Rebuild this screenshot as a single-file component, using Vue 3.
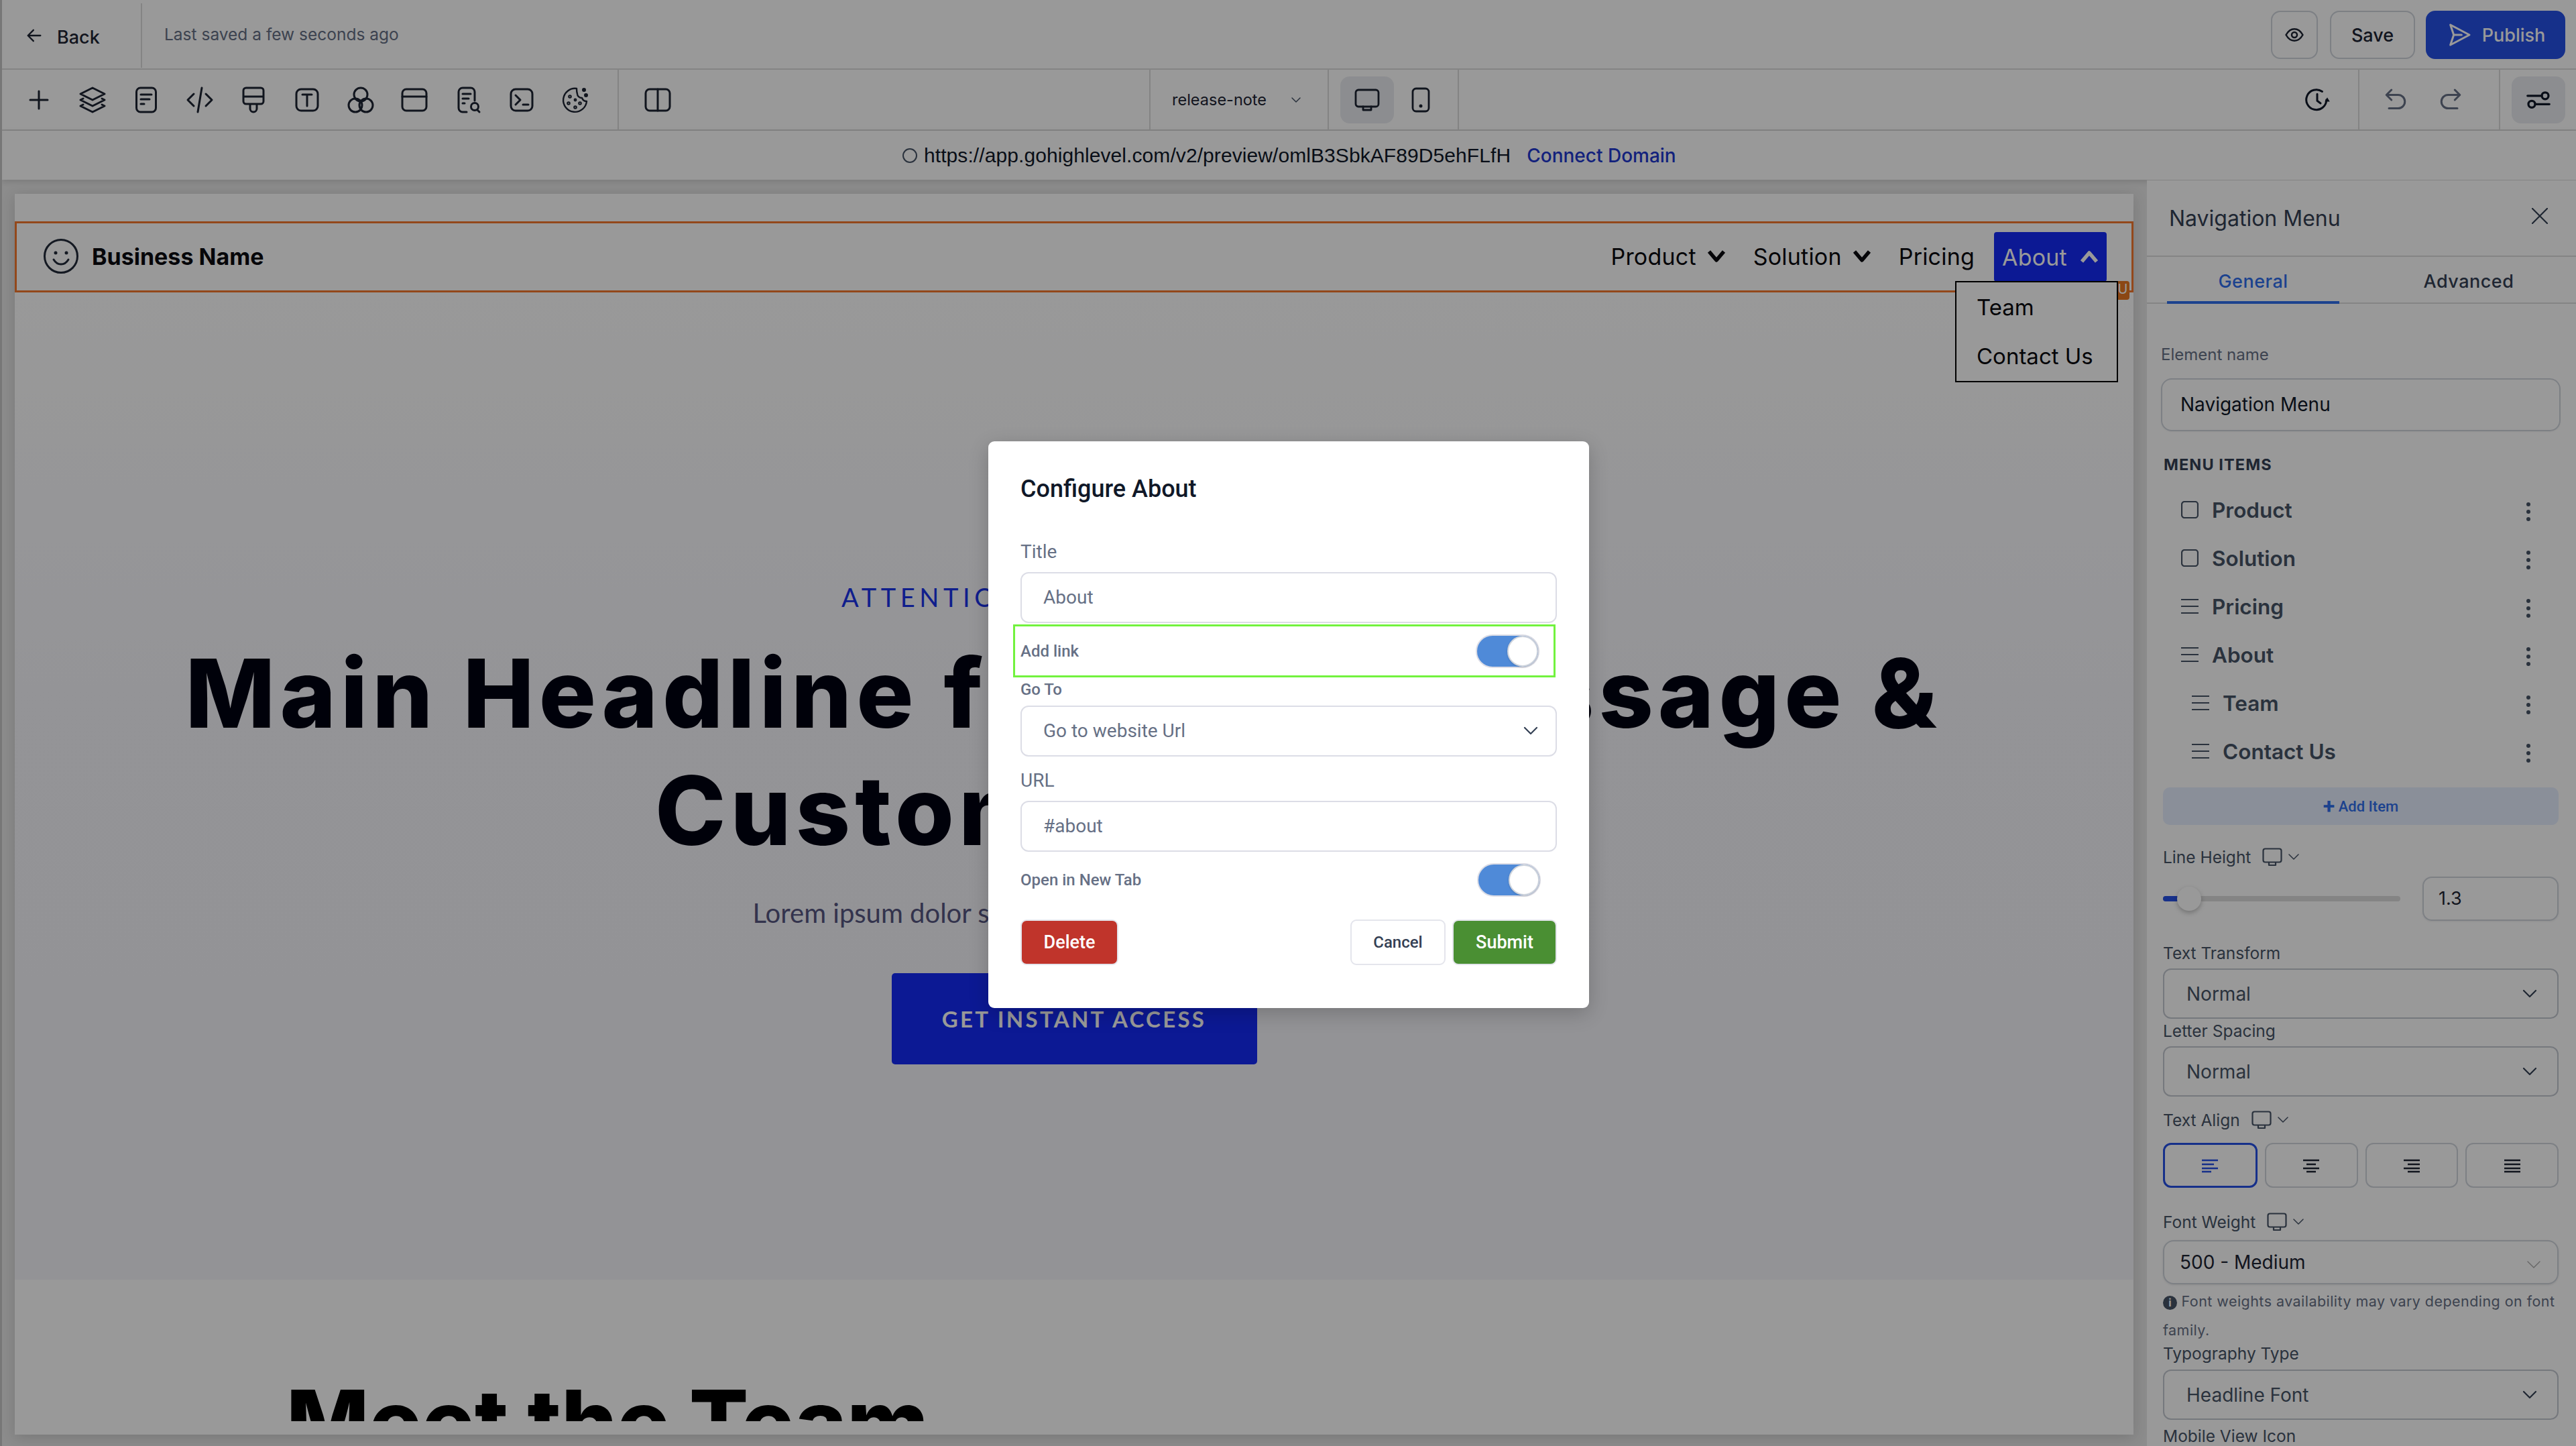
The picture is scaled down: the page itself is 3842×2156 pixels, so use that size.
<template>
  <div class="app">
    <header class="topbar">
      <div class="back">
        <svg class="ic-back" viewBox="0 0 24 24"><path d="M20 12H5M11 5l-7 7 7 7" /></svg>
        <span>Back</span>
      </div>
      <div class="saved">Last saved a few seconds ago</div>
      <div class="top-actions">
        <button class="btn-eye">
          <svg viewBox="0 0 24 24"><path d="M2 12c2.600-4.600 6-7 10-7s7.400 2.400 10 7c-2.600 4.600-6 7-10 7s-7.400-2.400-10-7z" /><circle cx="12" cy="12" r="3.200" /></svg>
        </button>
        <button class="btn-save">Save</button>
        <button class="btn-publish">
          <svg viewBox="0 0 24 24"><path d="M4 3l17 9-17 9 3-9-3-9zM7 12h7" /></svg>
          <span>Publish</span>
        </button>
      </div>
    </header>

    <div class="toolbar">
      <div class="tools">
        <span v-for="(t, i) in tools" :key="i" class="tool">
          <svg viewBox="0 0 44 44" v-html="t"></svg>
        </span>
      </div>
      <div class="tool-split">
        <svg viewBox="0 0 44 44"><rect x="4" y="6" width="36" height="32" rx="6" /><path d="M22 6v32" /></svg>
      </div>
      <div class="tool-gap"></div>
      <div class="page-select">
        <span>release-note</span>
        <svg viewBox="0 0 24 24"><path d="M6 9l6 6 6-6" /></svg>
      </div>
      <div class="devices">
        <span class="device active">
          <svg viewBox="0 0 40 40"><rect x="3" y="5" width="34" height="25" rx="4" /><path d="M14 30v5h12v-5" /></svg>
        </span>
        <span class="device">
          <svg viewBox="0 0 40 40"><rect x="8" y="3" width="24" height="34" rx="5" /><circle class="fill" cx="20" cy="29" r="2.500" /></svg>
        </span>
      </div>
      <div class="tool-space"></div>
      <div class="history">
        <svg viewBox="0 0 32 32"><path d="M27 16a12 12 0 1 1-5-10M16 9v8l4 3" /><path class="fill" d="M28 13l3 5h-6z" /></svg>
      </div>
      <div class="undo-redo">
        <svg viewBox="0 0 32 32"><path d="M11 4L5 10l6 6M5 10h14a7 7 0 0 1 0 16H8" /></svg>
        <svg viewBox="0 0 32 32"><path d="M21 4l6 6-6 6M27 10H13a7 7 0 0 0 0 16h11" /></svg>
      </div>
      <div class="settings">
        <span>
          <svg viewBox="0 0 32 32"><path d="M3 11h17M12 21h17" /><circle cx="24" cy="11" r="4" /><circle cx="8" cy="21" r="4" /></svg>
        </span>
      </div>
    </div>

    <div class="urlbar">
      <span class="url-dot"></span>
      <span class="url">https://app.gohighlevel.com/v2/preview/omlB3SbkAF89D5ehFLfH</span>
      <span class="connect">Connect Domain</span>
    </div>

    <div class="workspace">
      <div class="canvas">
        <div class="page">
          <nav class="nav">
            <div class="brand">
              <svg viewBox="0 0 52 52"><circle cx="26" cy="26" r="24.500" /><circle class="fill" cx="18" cy="21" r="2.500" /><circle class="fill" cx="34" cy="21" r="2.500" /><path d="M15 31c3 5 7 7 11 7s8-2 11-7" /></svg>
              <span>Business Name</span>
            </div>
            <ul class="menu">
              <li>Product <svg viewBox="0 0 28 20"><path d="M3 3l11 13L25 3" /></svg></li>
              <li>Solution <svg viewBox="0 0 28 20"><path d="M3 3l11 13L25 3" /></svg></li>
              <li>Pricing</li>
              <li class="current">About <svg viewBox="0 0 28 20"><path d="M3 17L14 4l11 13" /></svg></li>
            </ul>
            <span class="nav-tag">U</span>
            <div class="dropdown">
              <div>Team</div>
              <div>Contact Us</div>
            </div>
          </nav>

          <section class="hero">
            <div class="eyebrow">ATTENTION GRABBING TEXTS</div>
            <h1>Main Headline for Your Message &amp;<br />Customer Deals</h1>
            <p>Lorem ipsum dolor sit amet, consectetur adipiscing elit.</p>
            <a class="cta">GET INSTANT ACCESS</a>
          </section>

          <section class="team">
            <h2>Meet the Team</h2>
          </section>
        </div>
      </div>

      <aside class="panel">
        <div class="panel-head">
          <span>Navigation Menu</span>
          <svg viewBox="0 0 24 24"><path d="M1 1l22 22M23 1L1 23" /></svg>
        </div>
        <div class="tabs">
          <div class="tab on">General</div>
          <div class="tab">Advanced</div>
        </div>
        <div class="panel-body">
          <div class="el-label">Element name</div>
          <div class="el-input">Navigation Menu</div>
          <div class="section-title">MENU ITEMS</div>
          <div v-for="item in menuItems" :key="item.name" class="item" :class="{ sub: item.sub }">
            <svg viewBox="0 0 26 26">
              <rect v-if="item.box" x="1" y="1" width="24" height="24" rx="4" />
              <path v-else d="M0 3h26M0 13h26M0 23h26" />
            </svg>
            <span>{{ item.name }}</span>
            <i class="dots"><b></b><b></b><b></b></i>
          </div>
          <div class="add-item"><b>+</b> Add Item</div>

          <div class="lbl lbl-line">Line Height
            <svg class="mon" viewBox="0 0 30 28"><rect x="1.500" y="1.500" width="27" height="20" rx="3" /><path d="M10 22v4h10v-4" /></svg>
            <svg class="mini" viewBox="0 0 16 10"><path d="M1 1l7 7 7-7" /></svg>
          </div>
          <div class="slider-row">
            <div class="slider"><div class="slider-fill"></div><div class="slider-knob"></div></div>
            <div class="num">1.3</div>
          </div>

          <div class="lbl lbl-tt">Text Transform</div>
          <div class="sel">Normal <svg viewBox="0 0 22 14"><path d="M2 2l9 9 9-9" /></svg></div>
          <div class="lbl lbl-ls">Letter Spacing</div>
          <div class="sel sel-ls">Normal <svg viewBox="0 0 22 14"><path d="M2 2l9 9 9-9" /></svg></div>

          <div class="lbl lbl-ta">Text Align
            <svg class="mon" viewBox="0 0 30 28"><rect x="1.500" y="1.500" width="27" height="20" rx="3" /><path d="M10 22v4h10v-4" /></svg>
            <svg class="mini" viewBox="0 0 16 10"><path d="M1 1l7 7 7-7" /></svg>
          </div>
          <div class="aligns">
            <div v-for="(a, i) in aligns" :key="i" class="align" :class="{ on: i === 0 }">
              <svg viewBox="0 0 28 22"><path :d="a" /></svg>
            </div>
          </div>

          <div class="lbl lbl-fw">Font Weight
            <svg class="mon" viewBox="0 0 30 28"><rect x="1.500" y="1.500" width="27" height="20" rx="3" /><path d="M10 22v4h10v-4" /></svg>
            <svg class="mini" viewBox="0 0 16 10"><path d="M1 1l7 7 7-7" /></svg>
          </div>
          <div class="weight">500 - Medium <svg viewBox="0 0 22 14"><path d="M2 2l9 9 9-9" /></svg></div>
          <div class="note"><span class="info">i</span> Font weights availability may vary depending on font family.</div>
          <div class="lbl lbl-ty">Typography Type</div>
          <div class="sel sel-ty">Headline Font <svg viewBox="0 0 22 14"><path d="M2 2l9 9 9-9" /></svg></div>
          <div class="lbl lbl-mv">Mobile View Icon</div>
        </div>
      </aside>
    </div>

    <div class="overlay"></div>

    <div class="dialog">
      <h3>Configure About</h3>
      <label class="d-label d-title">Title</label>
      <div class="d-input">About</div>
      <div class="d-row d-link">
        <span>Add link</span>
        <span class="toggle"><i></i></span>
      </div>
      <label class="d-small">Go To</label>
      <div class="d-input d-select">Go to website Url
        <svg viewBox="0 0 22 14"><path d="M2 2l9 9 9-9" /></svg>
      </div>
      <label class="d-label d-url">URL</label>
      <div class="d-input">#about</div>
      <div class="d-row d-tab">
        <span>Open in New Tab</span>
        <span class="toggle"><i></i></span>
      </div>
      <div class="d-actions">
        <button class="d-delete">Delete</button>
        <button class="d-cancel">Cancel</button>
        <button class="d-submit">Submit</button>
      </div>
    </div>
  </div>
</template>

<script setup>
// toolbar glyphs, drawn on a 44 unit box
const tools = [
  '<path d="M22 9v26M9 22h26"/>',
  '<path d="M22 4l18 9-18 9-18-9zM8 20l-4 2 18 9 18-9-4-2M8 29l-4 2 18 9 18-9-4-2"/>',
  '<rect x="7.500" y="4" width="29" height="36" rx="6"/><path d="M14 14h16M14 21h13M14 28h5"/>',
  '<path d="M13 13l-9 9 9 9M31 13l9 9-9 9M25 4l-6 36"/>',
  '<path d="M7 8a4 4 0 0 1 4-4h22a4 4 0 0 1 4 4v16a4 4 0 0 1-4 4H11a4 4 0 0 1-4-4zM7 17h30M17 28v7a5 5 0 0 0 10 0v-7"/>',
  '<rect x="6" y="6" width="32" height="32" rx="7"/><path d="M15 14h14M22 14v17"/>',
  '<circle cx="22" cy="14" r="10"/><circle cx="14" cy="30" r="10"/><circle cx="30" cy="30" r="10"/>',
  '<rect x="4" y="6" width="36" height="32" rx="6"/><path d="M4 17h36"/>',
  '<path d="M20 40h-6a6 6 0 0 1-6-6V10a6 6 0 0 1 6-6h12a6 6 0 0 1 6 6v13M14 13h12M14 20h9M14 27h3"/><circle cx="32" cy="32" r="5.500"/><path d="M36 37l3 3"/>',
  '<rect x="6" y="6" width="32" height="32" rx="7"/><path d="M13 15l7 7-7 7M24 29h8"/>',
  '<path d="M24 5a17.500 17.500 0 1 0 15 19c-4 0-6-2-7-5-4 0-7-3-7-6-1-3-1-5-1-8z" stroke-width="2.400"/><circle cx="14" cy="17" r="1.800" stroke-width="2"/><circle cx="12" cy="27" r="1.800" stroke-width="2"/><circle cx="22" cy="33" r="1.800" stroke-width="2"/><circle cx="29" cy="27" r="1.800" stroke-width="2"/><circle cx="22" cy="22" r="1.400" stroke-width="2"/><circle class="fill" cx="35" cy="7" r="1.500"/><circle class="fill" cx="38" cy="15" r="1.500"/>'
]

const menuItems = [
  { name: 'Product', box: true },
  { name: 'Solution', box: true },
  { name: 'Pricing' },
  { name: 'About' },
  { name: 'Team', sub: true },
  { name: 'Contact Us', sub: true }
]

const aligns = [
  'M2 3h24M2 9h18M2 15h24M2 20h14',
  'M2 3h24M7 9h14M2 15h24M7 20h14',
  'M2 3h24M8 9h18M2 15h24M8 20h18',
  'M2 3h24M2 9h24M2 15h24M2 20h24'
]
</script>

<style>
html, body { margin: 0; background: #e9e9e9; }
</style>

<style scoped>
* { box-sizing: border-box; }
.app {
  position: relative;
  width: 3842px;
  height: 2156px;
  overflow: hidden;
  display: flex;
  flex-direction: column;
  font-family: Inter, "Liberation Sans", sans-serif;
  color: #1d2433;
  background: #fff;
  border-left: 3px solid #777;
}
svg { fill: none; stroke: currentColor; stroke-linecap: round; stroke-linejoin: round; display: block; }
.fill { fill: currentColor; stroke: none; }

/* top bar */
.topbar {
  height: 104px;
  display: flex;
  align-items: center;
  border-bottom: 2px solid #dcdcdc;
  flex: none;
}
.back {
  width: 209px;
  height: 96px;
  margin-top: 4px;
  padding-left: 34px;
  display: flex;
  align-items: center;
  gap: 20px;
  font-size: 27px;
  font-weight: 500;
  border-right: 2px solid #dcdcdc;
}
.back span { margin-top: 4px; }
.ic-back { width: 28px; height: 28px; stroke-width: 2; }
.saved { margin-left: 33px; margin-top: 0; font-size: 24.500px; color: #667085; }
.top-actions { margin-left: auto; margin-right: 16px; display: flex; gap: 18px; margin-top: 2px; }
.top-actions button { height: 72px; border-radius: 14px; font-family: inherit; font-size: 27px; font-weight: 500; background: #fff; border: 2px solid #d0d5dd; padding: 0; }
.btn-eye { width: 70px; display: flex; align-items: center; justify-content: center; color: #1d2433; }
.btn-eye svg { width: 30px; height: 30px; stroke-width: 2; }
.btn-save { width: 127px; color: #1d2433; }
.top-actions .btn-publish { width: 208px; margin-left: -2px; background: #2650e6; border-color: #2650e6; color: #fff; display: flex; align-items: center; justify-content: center; gap: 14px; }
.btn-publish svg { width: 40px; height: 40px; stroke-width: 1.800; }

/* toolbar */
.toolbar { height: 91px; flex: none; display: flex; align-items: stretch; border-bottom: 2px solid #dcdcdc; }
.tools { width: 920px; padding-left: 15px; display: flex; align-items: center; border-right: 2px solid #dcdcdc; }
.tool { width: 80px; display: flex; justify-content: center; color: #1d2433; }
.tool svg { width: 44px; height: 44px; stroke-width: 3; }
.tool-split { width: 115px; display: flex; align-items: center; justify-content: center; color: #1d2433; }
.tool-split svg { width: 44px; height: 44px; stroke-width: 3; }
.tool-gap { width: 676px; }
.tool-space { flex: 1; }
.page-select { width: 268px; border-left: 2px solid #dcdcdc; border-right: 2px solid #dcdcdc; display: flex; align-items: center; padding-left: 32px; font-size: 23.500px; color: #1d2433; }
.page-select svg { width: 24px; height: 24px; stroke-width: 1.500; margin-left: 32px; color: #475467; }
.devices { width: 194px; display: flex; align-items: center; padding-left: 17px; gap: 0; border-right: 2px solid #dcdcdc; }
.device { width: 80px; height: 70px; display: flex; align-items: center; justify-content: center; border-radius: 14px; color: #1d2433; }
.device.active { background: #eaecf0; }
.device svg { width: 40px; height: 40px; stroke-width: 2.800; }
.history { width: 117px; border-right: 2px solid #dcdcdc; display: flex; align-items: center; padding-left: 34px; color: #101828; }
.history svg { width: 40px; height: 40px; stroke-width: 2.400; }
.undo-redo { width: 210px; border-right: 2px solid #dcdcdc; display: flex; align-items: center; padding-left: 34px; gap: 42px; color: #667085; }
.undo-redo svg { width: 40px; height: 40px; stroke-width: 2.400; }
.settings { width: 113px; display: flex; align-items: center; padding-left: 17px; }
.settings span { width: 80px; height: 70px; background: #eaecf0; border-radius: 14px; display: flex; align-items: center; justify-content: center; color: #101828; }
.settings svg { width: 40px; height: 40px; stroke-width: 2.600; }

/* url bar */
.urlbar {
  height: 73px;
  flex: none;
  display: flex;
  align-items: center;
  padding-left: 1343px;
  font-family: "Liberation Sans", Arial, sans-serif;
  font-size: 30px;
  letter-spacing: 0.08px;
  color: #101828;
  box-shadow: 0 3px 8px rgba(0, 0, 0, 0.12);
  position: relative;
  z-index: 1;
}
.url-dot { width: 22px; height: 22px; border-radius: 50%; border: 2px solid #475467; margin-right: 10px; }
.connect { margin-left: 24px; color: #2138cf; font-family: Inter, sans-serif; font-weight: 500; font-size: 28px; letter-spacing: 0; }

/* canvas */
.workspace { flex: 1; display: flex; min-height: 0; }
.canvas { flex: 1; background: #e9e9e9; padding: 21px 20px 0 19px; min-width: 0; }
.page { height: 1850px; background: #fff; overflow: hidden; box-shadow: 0 4px 20px rgba(0, 0, 0, 0.15); position: relative; }

.nav {
  margin-top: 41px;
  height: 106px;
  border: 3px solid #f5792d;
  display: flex;
  align-items: center;
  justify-content: space-between;
  padding: 0 37px 2px 40px;
  position: relative;
}
.brand { display: flex; align-items: center; gap: 20px; font-weight: 700; font-size: 34px; color: #0a0a0f; }
.brand svg { width: 52px; height: 52px; color: #222a3a; stroke-width: 3; }
.menu { list-style: none; margin: 0; padding: 0; display: flex; align-items: center; font-size: 34px; letter-spacing: 0.2px; color: #0a0a0f; }
.menu li { display: flex; align-items: center; gap: 16px; margin-left: 41px; height: 74px; white-space: nowrap; }
.menu svg { width: 28px; height: 20px; stroke-width: 5.500; stroke-linecap: butt; }
.menu li.current { background: #142bf7; color: #fff; padding: 0 12px 0 12px; border-radius: 4px; margin-left: 29px; width: 168px; margin-top: 2px; gap: 19px; }
.dropdown { position: absolute; top: 86px; right: 20px; width: 243px; height: 151px; background: #fff; border: 2px solid #000; z-index: 2; padding: 0 30px; font-size: 33px; color: #0a0a0f; display: flex; flex-direction: column; justify-content: center; gap: 33px; line-height: 40px; }
.nav-tag { position: absolute; right: 3px; top: 86px; width: 20px; height: 28px; background: #e87722; color: #fff; border-radius: 4px; font-size: 20px; text-align: center; overflow: hidden; }

.hero {
  height: 1472px;
  padding-top: 429px;
  text-align: center;
  background: linear-gradient(#ffffff, #f7f7fc 40%, #f5f5fa);
}
.eyebrow { font-family: Lato, sans-serif; font-size: 38px; letter-spacing: 6.600px; color: #1a32ea; line-height: 50px; }
.hero h1 { margin: 31px 0 0; padding-right: 32px; font-family: Inter, sans-serif; font-weight: 800; font-size: 142px; line-height: 175px; color: #000212; white-space: nowrap; letter-spacing: 7px; }
.hero p { margin: 39px 0 0; font-family: Lato, sans-serif; font-size: 40px; line-height: 52px; color: #555580; }
.cta { display: flex; width: 545px; height: 136px; margin: 64px auto 0; align-items: center; justify-content: center; background: #142bf7; color: #fff; border-radius: 5px; font-family: Lato, sans-serif; font-weight: 700; font-size: 33px; letter-spacing: 3.300px; }

.team { height: 231px; background: #fff; padding: 133px 0 0 405px; }
.team h2 { margin: 0; height: 78px; overflow: hidden; font-family: Inter, sans-serif; font-weight: 800; font-size: 131px; line-height: 157px; color: #000; white-space: nowrap; }

/* right panel */
.panel { width: 640px; flex: none; background: #fff; position: relative; z-index: 2; border-top: 1px solid #dcdcdc; overflow: hidden; }
.panel-head { height: 114px; display: flex; align-items: center; padding: 0 30px 0 33px; justify-content: space-between; font-size: 32px; font-weight: 400; color: #344054; border-bottom: 2px solid #dcdcdc; }
.panel-head svg { width: 24px; height: 24px; stroke-width: 2.200; margin-top: -6px; margin-right: 12px; }
.tabs { height: 70px; display: flex; padding-left: 30px; border-bottom: 2px solid #dcdcdc; font-size: 27px; font-weight: 500; color: #344054; }
.tab { width: 257px; text-align: center; padding-top: 20px; height: 70px; letter-spacing: 0.5px; }
.tab.on { color: #2f6fed; border-bottom: 4px solid #2f6fed; margin-right: 43px; }
.tab:not(.on) { width: 300px; }
.panel-body { padding: 0 23px 0 24px; }
.el-label { margin: 62px 0 0 -3px; font-size: 24px; line-height: 28px; color: #667085; }
.el-input { height: 79px; margin: 21px 0 0 -3px; padding-left: 27px; border: 2px solid #d0d5dd; border-radius: 16px; font-size: 28px; line-height: 75px; color: #101828; box-shadow: 0 1px 2px rgba(16, 24, 40, 0.05); }
.section-title { margin: 36px 0 0 1px; font-size: 23.500px; font-weight: 700; line-height: 28px; letter-spacing: 1.100px; color: #344054; }
.item { height: 72px; display: flex; align-items: center; padding-left: 27px; font-size: 31.500px; font-weight: 600; color: #475467; position: relative; }
.item svg { width: 26px; height: 26px; stroke-width: 2.200; margin-right: 20px; stroke-linecap: butt; color: #475467; }
.item.sub { padding-left: 43px; }
.dots { position: absolute; right: 45px; top: 25px; display: flex; flex-direction: column; gap: 5px; }
.dots b { width: 6px; height: 6px; border-radius: 50%; background: #475467; display: block; }
.section-title + .item { margin-top: 17px; }
.add-item { height: 56px; margin: 18px 3px 0 0; background: #e6eeff; border-radius: 10px; text-align: center; font-family: Roboto, sans-serif; font-size: 22px; font-weight: 500; line-height: 58px; color: #2f6fed; }
.add-item b { font-size: 32px; line-height: 30px; vertical-align: -3px; }
.lbl { font-size: 24.500px; color: #475467; display: flex; align-items: center; height: 30px; }
.mon { width: 30px; height: 28px; stroke-width: 2.200; margin-left: 17px; }
.mini { width: 16px; height: 10px; stroke-width: 1.500; margin-left: 9px; }
.lbl-line { margin-top: 33px; }
.slider-row { display: flex; align-items: center; margin: 14px 3px 0 0; height: 66px; }
.slider { width: 354px; height: 8px; border-radius: 4px; background: #dcdcdc; position: relative; }
.slider-fill { width: 30px; height: 8px; background: #2650e6; border-radius: 4px; }
.slider-knob { position: absolute; left: 21px; top: -14px; width: 36px; height: 36px; border-radius: 50%; background: #fff; box-shadow: 0 3px 7px rgba(0, 0, 0, 0.25); }
.num { width: 203px; height: 66px; margin-left: auto; border: 2px solid #d0d5dd; border-radius: 14px; padding-left: 22px; font-size: 27px; line-height: 62px; color: #1d2433; box-shadow: 0 1px 3px rgba(16, 24, 40, 0.08); }
.lbl-tt { margin-top: 33px; }
.sel { height: 75px; margin: 8px 3px 0 0; border: 2px solid #c4c8d0; border-radius: 12px; padding: 0 30px 0 33px; display: flex; align-items: center; justify-content: space-between; font-size: 28px; color: #475467; }
.sel svg, .weight svg, .d-select svg { width: 22px; height: 14px; stroke-width: 2.200; color: #344054; }
.lbl-ls { margin-top: 3px; }
.sel-ls { margin-top: 8px; }
.lbl-ta { margin-top: 20px; }
.aligns { display: flex; gap: 11px; margin: 19px 3px 0 0; }
.align { flex: 1; height: 67px; border: 2px solid #d0d5dd; border-radius: 12px; display: flex; align-items: center; justify-content: center; color: #1d2433; }
.align.on { border: 3px solid #2650e6; color: #2650e6; }
.align svg { width: 28px; height: 22px; stroke-width: 2.400; stroke-linecap: butt; }
.lbl-fw { margin-top: 36px; }
.weight { height: 66px; margin: 12px 3px 0 0; border: 2px solid #d0d5dd; border-radius: 16px; padding: 0 24px 0 23px; display: flex; align-items: center; justify-content: space-between; font-size: 28px; color: #1d2433; box-shadow: 0 1px 3px rgba(16, 24, 40, 0.1); }
.weight svg { color: #aaa; stroke-width: 1.400; margin-top: 8px; }
.note { margin: 4px 0 0; font-size: 21.500px; line-height: 43px; color: #667085; letter-spacing: 0.450px; }
.info { display: inline-block; width: 21px; height: 21px; border-radius: 50%; background: #475467; color: #fff; font-size: 16px; font-weight: 700; line-height: 21px; text-align: center; letter-spacing: 0; vertical-align: 0; }
.lbl-ty { margin-top: -2px; }
.sel-ty { margin-top: 9px; }
.lbl-mv { margin-top: 9px; }

/* overlay and dialog */
.overlay { position: absolute; inset: 0; background: rgba(0, 0, 0, 0.4); z-index: 5; }
.dialog {
  position: absolute;
  z-index: 6;
  left: 1471px;
  top: 658px;
  width: 896px;
  height: 845px;
  background: #fff;
  border-radius: 9px;
  padding: 0 48px;
  font-family: Roboto, sans-serif;
  box-shadow: 0 8px 30px rgba(0, 0, 0, 0.2);
  display: flex;
  flex-direction: column;
}
.dialog h3 { margin: 48px 0 0; font-size: 36px; line-height: 46px; font-weight: 500; color: #101828; }
.d-label { font-size: 28px; line-height: 32px; color: #667085; }
.d-title { margin-top: 55px; }
.d-input { height: 76px; flex: none; margin-top: 14px; border: 2px solid #dcdde6; border-radius: 12px; padding-left: 32px; font-size: 28px; line-height: 72px; color: #667085; }
.d-row { display: flex; align-items: center; justify-content: space-between; font-size: 24px; font-weight: 500; color: #667085; }
.d-link { height: 79px; margin: 2px 2px 0 -11px; padding: 0 21px 0 8px; border: 3px solid #72f23e; }
.d-small { font-size: 24px; font-weight: 500; line-height: 28px; margin-top: 4px; color: #667085; }
.d-small + .d-input { margin-top: 10px; }
.d-select { display: flex; align-items: center; justify-content: space-between; padding-right: 26px; }
.d-url { margin-top: 20px; }
.d-url + .d-input { margin-top: 14px; }
.d-tab { height: 50px; margin-top: 17px; padding-right: 24px; }
.toggle { width: 95px; height: 50px; border-radius: 25px; background: #4f8ad8; border: 2px solid #dcdde6; position: relative; display: block; }
.toggle i { position: absolute; right: 0; top: 0; width: 46px; height: 46px; border-radius: 50%; background: #fff; border: 2px solid #d0d5dd; box-shadow: 0 1px 3px rgba(0, 0, 0, 0.15); }
.d-actions { display: flex; align-items: center; margin-top: 34px; gap: 10px; }
.d-actions button { height: 68px; border-radius: 9px; font-family: inherit; font-weight: 500; font-size: 27px; border: 2px solid #e4e5ec; padding: 0; }
.d-delete { width: 146px; background: #c0342b; color: #fff; margin-right: auto; }
.d-actions .d-cancel { width: 142px; background: #fff; color: #344054; font-size: 24px; }
.d-submit { width: 156px; background: #4a8f33; color: #fff; }
</style>
